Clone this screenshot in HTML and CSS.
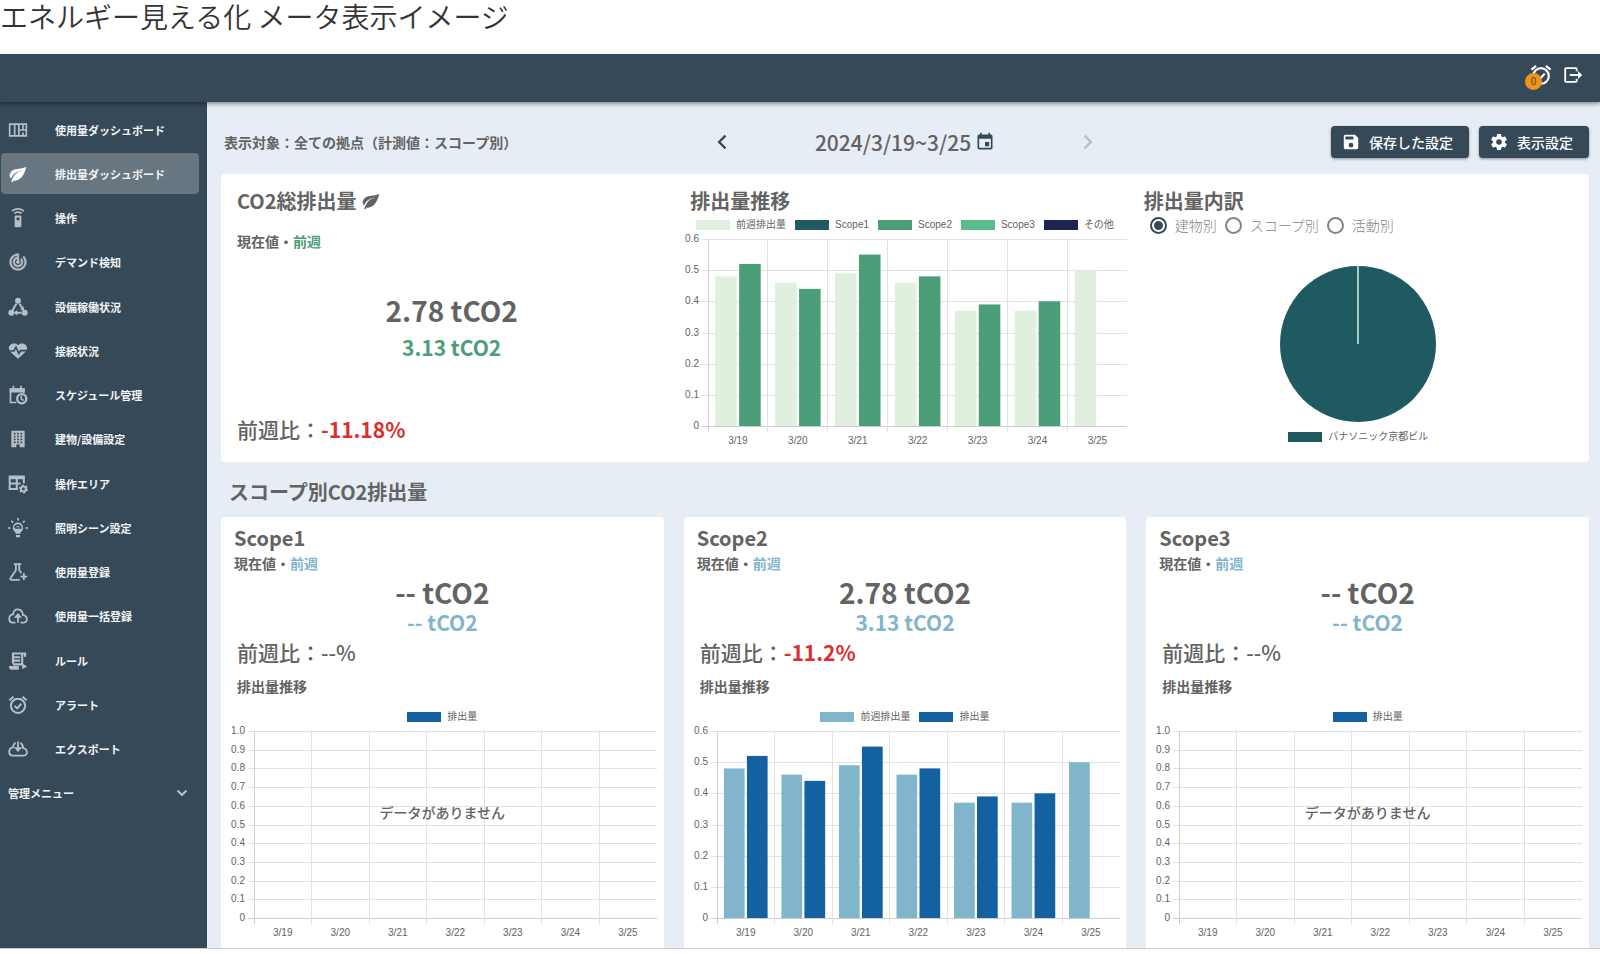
FILE: index.html
```html
<!DOCTYPE html>
<html lang="ja">
<head>
<meta charset="utf-8">
<meta name="viewport" content="width=device-width, initial-scale=1">
<title>エネルギー見える化 メータ表示イメージ</title>
<link rel="stylesheet" href="styles.css">
</head>
<body>
<svg class="sprite" aria-hidden="true">
  <symbol id="i-leaf" viewBox="0 0 24 24"><path d="M17,8C8,10 5.9,16.17 3.82,21.34L5.71,22L6.66,19.7C7.14,19.87 7.64,20 8,20C19,20 22,3 22,3C21,5 14,5.25 9,6.25C4,7.25 2,11.5 2,13.5C2,15.5 3.75,17.25 3.75,17.25C7,8 17,8 17,8Z"/></symbol>
  <symbol id="i-alarm" viewBox="0 0 24 24"><g fill="none" stroke="currentColor" stroke-width="2.400"><circle cx="12" cy="13" r="8.500"/><path d="M8 13l3 3 5-5.500M1.600 6.200L6.600 2M22.400 6.200L17.400 2"/></g></symbol>
</svg>

<h1 class="page-title">エネルギー見える化 メータ表示イメージ</h1>

<div class="app">
  <header class="topbar">
    <button class="icon-button" type="button" aria-label="アラート">
      <svg class="icon icon-top" viewBox="0 0 24 24"><use href="#i-alarm"/></svg>
      <span class="badge">0</span>
    </button>
    <button class="icon-button" type="button" aria-label="ログアウト">
      <svg class="icon icon-top" viewBox="0 0 24 24"><path fill="none" stroke="currentColor" stroke-width="2" d="M16 8V5.500Q16 4.500 15 4.500H4.500Q3.500 4.500 3.500 5.500V18.500Q3.500 19.500 4.500 19.500H15Q16 19.500 16 18.500V16M8.500 12H20"/><path d="M17.500 7.500L22 12L17.500 16.500Z"/></svg>
    </button>
  </header>

  <div class="body">
    <nav class="sidebar" aria-label="メニュー">
      <a class="nav-item" href="#"><svg class="icon" viewBox="0 0 24 24"><path fill="none" stroke="currentColor" stroke-width="2" d="M2 5H22V19H2ZM8 5V19M13 5V19M18 5V12M13 12H22M18 15V19"/></svg>使用量ダッシュボード</a>
      <a class="nav-item nav-item-active" href="#" aria-current="page"><svg class="icon" viewBox="0 0 24 24"><use href="#i-leaf"/></svg>排出量ダッシュボード</a>
      <a class="nav-item" href="#"><svg class="icon" viewBox="0 0 24 24"><path d="M12,0C8.96,0 6.21,1.23 4.22,3.22L5.63,4.63C7.26,3 9.5,2 12,2C14.5,2 16.74,3 18.36,4.64L19.77,3.23C17.79,1.23 15.04,0 12,0M7.05,6.05L8.46,7.46C9.37,6.56 10.62,6 12,6C13.38,6 14.63,6.56 15.54,7.46L16.95,6.05C15.68,4.78 13.93,4 12,4C10.07,4 8.32,4.78 7.05,6.05M12,15A2,2 0 0,1 10,13A2,2 0 0,1 12,11A2,2 0 0,1 14,13A2,2 0 0,1 12,15M15,9H9A1,1 0 0,0 8,10V22A1,1 0 0,0 9,23H15A1,1 0 0,0 16,22V10A1,1 0 0,0 15,9Z"/></svg>操作</a>
      <a class="nav-item" href="#"><svg class="icon" viewBox="0 0 24 24"><path stroke="currentColor" stroke-width=".6" d="M19.07 4.93l-1.41 1.41C19.1 7.79 20 9.79 20 12c0 4.42-3.58 8-8 8s-8-3.58-8-8c0-4.08 3.05-7.44 7-7.93v2.02C8.16 6.57 6 9.03 6 12c0 3.31 2.69 6 6 6s6-2.69 6-6c0-1.66-.67-3.16-1.76-4.24l-1.41 1.41C15.55 9.9 16 10.9 16 12c0 2.21-1.79 4-4 4s-4-1.79-4-4c0-1.86 1.28-3.41 3-3.86v2.14c-.6.35-1 .98-1 1.72 0 1.1.9 2 2 2s2-.9 2-2c0-.74-.4-1.38-1-1.72V2h-1C6.480 2 2 6.480 2 12s4.480 10 10 10 10-4.480 10-10c0-2.760-1.120-5.260-2.930-7.070z"/></svg>デマンド検知</a>
      <a class="nav-item" href="#"><svg class="icon" viewBox="0 0 24 24"><circle cx="12" cy="4.500" r="3.500"/><circle cx="4" cy="19" r="3.600"/><circle cx="20" cy="19" r="3.600"/><path fill="none" stroke="currentColor" stroke-width="2.400" d="M10 8L5.500 16M14 8L17.500 14M9 19H16"/><path d="M14.500 15.500L19.500 15.500L18.500 11ZM11 15.500V22.500L7 19Z"/></svg>設備稼働状況</a>
      <a class="nav-item" href="#"><svg class="icon" viewBox="0 0 24 24"><path d="M12,21.35L10.55,20.03C5.4,15.36 1,12.27 1,8.5C1,5.41 4.42,3 7.5,3C9.24,3 10.91,3.81 12,5.08C13.09,3.81 14.76,3 16.5,3C19.58,3 23,5.41 23,8.5C23,12.27 18.6,15.36 13.45,20.03L12,21.35Z"/><path class="icon-cut" d="M0 12H7L9.500 7.500L13 15L15 11.500H24"/></svg>接続状況</a>
      <a class="nav-item" href="#"><svg class="icon" viewBox="0 0 24 24"><path fill="none" stroke="currentColor" stroke-width="2" d="M10 21H3V5H19V10M6.500 1V5M15.500 1V5"/><path d="M2 4H20V9H2Z"/><circle cx="16.500" cy="16.500" r="5.500" fill="none" stroke="currentColor" stroke-width="2.800"/><path fill="none" stroke="currentColor" stroke-width="1.800" d="M16 13V17L19 18.500"/></svg>スケジュール管理</a>
      <a class="nav-item" href="#"><svg class="icon" viewBox="0 0 24 24"><path d="M4 2H20V22H14V18.500H10V22H4Z"/><path class="icon-cut" stroke-dasharray="2 2" d="M7 5.500H18M7 9H18M7 12.500H18M7 16H18"/></svg>建物/設備設定</a>
      <a class="nav-item" href="#"><svg class="icon" viewBox="0 0 24 24"><path fill="none" stroke="currentColor" stroke-width="2.400" d="M12 18H2V3H19V11M2 5H19M10.500 3V18M2 11.500H15"/><circle cx="18.500" cy="18" r="3" fill="none" stroke="currentColor" stroke-width="2.500"/><circle cx="18.500" cy="18" r="4.700" fill="none" stroke="currentColor" stroke-width="1.600" stroke-dasharray="2.460 2.460"/></svg>操作エリア</a>
      <a class="nav-item" href="#"><svg class="icon" viewBox="0 0 24 24"><path fill="none" stroke="currentColor" stroke-width="2" d="M12 0V3M0 12H3M21 12H24M4 3.500L6 5.500M20 3.500L18 5.500"/><path d="M12 5.500A6.300 6.300 0 0 0 9 17.200V19H15V17.200A6.300 6.300 0 0 0 12 5.500ZM9.500 20.500H14.500V23H9.500Z"/><path class="icon-cut" d="M8.500 12H15.500A3.500 3.500 0 0 0 8.500 12"/></svg>照明シーン設定</a>
      <a class="nav-item" href="#"><svg class="icon" viewBox="0 0 24 24"><path fill="none" stroke="currentColor" stroke-width="2.200" d="M7 2.500H16M9.500 3V10L3 19.500C2.500 21 3 21.500 4 21.500H14M13.500 3V9.500L16 13.500M19 13.500V21.500M15 17.500H23"/></svg>使用量登録</a>
      <a class="nav-item" href="#"><svg class="icon" viewBox="0 0 24 24"><path fill="none" stroke="currentColor" stroke-width="2.200" d="M9 20H6C-.500 19.500 .500 10.500 6 10C7.500 1.500 17 2.500 18 11C24 11.500 24 20 19 20H15M12 20V12"/><path d="M7 14L12 8.500L17 14Z"/></svg>使用量一括登録</a>
      <a class="nav-item" href="#"><svg class="icon" viewBox="0 0 24 24"><path fill="none" stroke="currentColor" stroke-width="2.600" d="M6 15V3H20.500V7M17 3V16H6M6 7.500H14.500M6 11.500H14.500"/><path d="M1 18H13V22.500H4C2 22.500 1 20 1 18ZM17 15L23 18.500L17 22Z"/></svg>ルール</a>
      <a class="nav-item" href="#"><svg class="icon" viewBox="0 0 24 24"><use href="#i-alarm"/></svg>アラート</a>
      <a class="nav-item" href="#"><svg class="icon" viewBox="0 0 24 24"><path fill="none" stroke="currentColor" stroke-width="2.200" d="M9 4.500C7 6 6 8 6 10C.500 10.500 -.500 19.500 6 20H19C24 20 24 11.500 18 11C18 8 17 6 15 4.500M12 3V12"/><path d="M7 10H17L12 15.500Z"/></svg>エクスポート</a>
      <button class="nav-group" type="button" aria-expanded="false">管理メニュー<svg class="icon icon-small" viewBox="0 0 24 24"><path fill="none" stroke="currentColor" stroke-width="4" d="M3 7L12 16L21 7"/></svg></button>
    </nav>

    <main class="content">
      <div class="toolbar">
        <p class="target">表示対象：全ての拠点（計測値：スコープ別）</p>
        <div class="period">
          <button class="step" type="button" aria-label="前の週"><svg class="icon icon-small" viewBox="0 0 24 24"><path fill="none" stroke="currentColor" stroke-width="4" d="M18 1L7 12L18 23"/></svg></button>
          <button class="date" type="button">2024/3/19~3/25<svg class="icon icon-date" viewBox="0 0 24 24"><path d="M17 12h-5v5h5v-5zM16 1v2H8V1H6v2H5c-1.110 0-1.990.9-1.990 2L3 19c0 1.100.89 2 2 2h14c1.100 0 2-.9 2-2V5c0-1.100-.9-2-2-2h-1V1h-2zm3 18H5V8h14v11z"/></svg></button>
          <button class="step" type="button" aria-label="次の週" disabled><svg class="icon icon-small" viewBox="0 0 24 24"><path fill="none" stroke="currentColor" stroke-width="4" d="M6 1L17 12L6 23"/></svg></button>
        </div>
        <div class="actions">
          <button class="action" type="button"><svg class="icon icon-action" viewBox="2 2 20 20"><path d="M15,9H5V5H15M12,19A3,3 0 0,1 9,16A3,3 0 0,1 12,13A3,3 0 0,1 15,16A3,3 0 0,1 12,19M17,3H5C3.89,3 3,3.9 3,5V19A2,2 0 0,0 5,21H19A2,2 0 0,0 21,19V7L17,3Z"/></svg>保存した設定</button>
          <button class="action" type="button"><svg class="icon icon-action" viewBox="2 2 20 20"><path d="M12,15.5A3.5,3.5 0 0,1 8.5,12A3.5,3.5 0 0,1 12,8.5A3.5,3.5 0 0,1 15.5,12A3.5,3.5 0 0,1 12,15.5M19.43,12.97C19.47,12.65 19.5,12.33 19.5,12C19.5,11.67 19.47,11.34 19.43,11L21.54,9.37C21.73,9.22 21.78,8.95 21.66,8.73L19.66,5.27C19.54,5.05 19.27,4.96 19.05,5.05L16.56,6.05C16.04,5.66 15.5,5.32 14.87,5.07L14.5,2.42C14.46,2.18 14.25,2 14,2H10C9.75,2 9.54,2.18 9.5,2.42L9.13,5.07C8.5,5.32 7.96,5.66 7.44,6.05L4.95,5.05C4.73,4.96 4.46,5.05 4.34,5.27L2.34,8.73C2.21,8.95 2.27,9.22 2.46,9.37L4.57,11C4.53,11.34 4.5,11.67 4.5,12C4.5,12.33 4.53,12.65 4.57,12.97L2.46,14.63C2.27,14.78 2.21,15.05 2.34,15.27L4.34,18.73C4.46,18.95 4.73,19.03 4.95,18.95L7.44,17.94C7.96,18.34 8.5,18.68 9.13,18.93L9.5,21.58C9.54,21.82 9.75,22 10,22H14C14.25,22 14.46,21.82 14.5,21.58L14.87,18.93C15.5,18.67 16.04,18.34 16.56,17.94L19.05,18.95C19.27,19.03 19.54,18.95 19.66,18.73L21.66,15.27C21.78,15.05 21.73,14.78 21.54,14.63L19.43,12.97Z"/></svg>表示設定</button>
        </div>
      </div>

      <section class="card summary">
        <div class="summary-total">
          <h2 class="heading">CO2総排出量<svg class="icon icon-heading" viewBox="0 0 24 24"><use href="#i-leaf"/></svg></h2>
          <p class="caption">現在値・<span class="green">前週</span></p>
          <p class="value">2.78 tCO2</p>
          <p class="value-prev green">3.13 tCO2</p>
          <p class="ratio">前週比：<span class="red">-11.18%</span></p>
        </div>
        <div class="summary-trend">
          <h2 class="heading">排出量推移</h2>
          <ul class="legend">
            <li class="legend-item"><span class="swatch swatch-prev"></span>前週排出量</li>
            <li class="legend-item"><span class="swatch swatch-scope1"></span>Scope1</li>
            <li class="legend-item"><span class="swatch swatch-scope2"></span>Scope2</li>
            <li class="legend-item"><span class="swatch swatch-scope3"></span>Scope3</li>
            <li class="legend-item"><span class="swatch swatch-other"></span>その他</li>
          </ul>
          <div class="chart chart-green" data-chart="week"></div>
        </div>
        <div class="summary-share">
          <h2 class="heading">排出量内訳</h2>
          <div class="radios" role="radiogroup" aria-label="排出量内訳">
            <label class="radio"><input type="radio" name="share" checked>建物別</label>
            <label class="radio"><input type="radio" name="share">スコープ別</label>
            <label class="radio"><input type="radio" name="share">活動別</label>
          </div>
          <svg class="pie" viewBox="0 0 158 158" role="img" aria-label="パナソニック京都ビル 100%"><circle cx="79" cy="79" r="79"/><path d="M79 0V79"/></svg>
          <ul class="legend">
            <li class="legend-item"><span class="swatch swatch-scope1"></span>パナソニック京都ビル</li>
          </ul>
        </div>
      </section>

      <h2 class="heading section-heading">スコープ別CO2排出量</h2>

      <div class="scopes">
        <section class="card scope">
          <h3 class="heading">Scope1</h3>
          <p class="caption">現在値・<span class="sky">前週</span></p>
          <p class="value">-- tCO2</p>
          <p class="value-prev sky">-- tCO2</p>
          <p class="ratio">前週比：--%</p>
          <h4 class="trend-title">排出量推移</h4>
          <ul class="legend"><li class="legend-item"><span class="swatch swatch-now"></span>排出量</li></ul>
          <div class="chart" data-chart="empty"><p class="no-data">データがありません</p></div>
        </section>
        <section class="card scope">
          <h3 class="heading">Scope2</h3>
          <p class="caption">現在値・<span class="sky">前週</span></p>
          <p class="value">2.78 tCO2</p>
          <p class="value-prev sky">3.13 tCO2</p>
          <p class="ratio">前週比：<span class="red">-11.2%</span></p>
          <h4 class="trend-title">排出量推移</h4>
          <ul class="legend">
            <li class="legend-item"><span class="swatch swatch-past"></span>前週排出量</li>
            <li class="legend-item"><span class="swatch swatch-now"></span>排出量</li>
          </ul>
          <div class="chart" data-chart="week"></div>
        </section>
        <section class="card scope">
          <h3 class="heading">Scope3</h3>
          <p class="caption">現在値・<span class="sky">前週</span></p>
          <p class="value">-- tCO2</p>
          <p class="value-prev sky">-- tCO2</p>
          <p class="ratio">前週比：--%</p>
          <h4 class="trend-title">排出量推移</h4>
          <ul class="legend"><li class="legend-item"><span class="swatch swatch-now"></span>排出量</li></ul>
          <div class="chart" data-chart="empty"><p class="no-data">データがありません</p></div>
        </section>
      </div>
    </main>
  </div>
</div>
<script src="charts.js"></script>
</body>
</html>
```

FILE: styles.css
```css
:root {
  --navy: #364959;
  --text: #636363;
  --green: #4b9e78;
  --sky: #80b5cb;
  --now: #1461a1;
  --jp: "Noto Sans CJK JP", "Noto Sans", sans-serif;
}

* { box-sizing: border-box; }

body {
  margin: 0;
  min-height: 100vh;
  padding-bottom: 5px;
  display: flex;
  flex-direction: column;
  background: #fff;
  color: var(--text);
  font-family: var(--jp);
  font-size: 14px;
}

h1, h2, h3, h4, p, ul { margin: 0; padding: 0; }
ul { list-style: none; }

button {
  border: 0;
  padding: 0;
  background: none;
  color: inherit;
  font: inherit;
  cursor: pointer;
}

.sprite { position: absolute; width: 0; height: 0; }

.icon {
  width: 20px;
  height: 20px;
  flex: none;
  fill: currentColor;
  overflow: visible;
}
.icon-small { width: 14px; height: 14px; }
.icon-top { width: 22px; height: 22px; display: block; }
.icon-date { width: 20px; height: 20px; color: var(--navy); }
.icon-action { width: 16px; height: 16px; }
.icon-heading { width: 20px; height: 20px; }
.icon-cut { fill: none; stroke: var(--navy); stroke-width: 2; }

.page-title {
  height: 54px;
  color: #333;
  font-size: 28px;
  font-weight: 350;
  line-height: 32px;
}

.app {
  flex: 1;
  display: flex;
  flex-direction: column;
  border-bottom: 1px solid #c9ced3;
}

.topbar {
  position: relative;
  height: 48px;
  padding: 0 16px 6px;
  display: flex;
  align-items: center;
  justify-content: flex-end;
  gap: 10px;
  background: var(--navy);
  color: #fff;
  box-shadow: 0 2px 4px rgba(0, 0, 0, .4);
}
.icon-button { position: relative; }
.badge {
  position: absolute;
  left: -5px;
  bottom: -4px;
  width: 17px;
  height: 17px;
  border-radius: 50%;
  background: #ef9419;
  color: #5a4526;
  font: 10px/17px "Liberation Sans", Arial, sans-serif;
}

.body { flex: 1; display: flex; }

.sidebar {
  width: 207px;
  flex: none;
  padding: 7px 8px 134px 1px;
  display: flex;
  flex-direction: column;
  justify-content: space-between;
  background: var(--navy);
  color: #f2f4f5;
  font-size: 11px;
  font-weight: 700;
}
.nav-item {
  height: 41px;
  padding-left: 7px;
  display: flex;
  align-items: center;
  gap: 27px;
  border-radius: 4px;
  color: inherit;
  text-decoration: none;
}
.nav-item .icon { color: #b4bfc7; }
.nav-item-active { background: #687682; }
.nav-item-active .icon { color: #fff; }
.nav-group {
  height: 41px;
  padding: 0 11px 0 7px;
  display: flex;
  align-items: center;
  justify-content: space-between;
}
.nav-group .icon { width: 12px; height: 12px; color: #b4bfc7; }

.content {
  flex: 1;
  min-width: 0;
  padding: 24px 11px 0 14px;
  display: flex;
  flex-direction: column;
  background: #e6edf4;
}

.toolbar {
  display: grid;
  grid-template-columns: 1fr 382px 1fr;
  align-items: center;
  margin-bottom: 16px;
}
.target { padding-left: 3px; font-weight: 700; white-space: nowrap; }
.period { display: flex; align-items: center; justify-content: space-between; }
.step { width: 16px; height: 24px; display: grid; place-items: center; color: var(--navy); }
.step:disabled { color: #b6bfc7; }
.date { display: flex; align-items: center; gap: 4px; font-size: 21px; font-weight: 500; line-height: 26px; }
.actions { display: flex; justify-content: flex-end; gap: 10px; }
.action {
  height: 32px;
  padding: 0 16px 0 12px;
  display: flex;
  align-items: center;
  gap: 10px;
  border-radius: 4px;
  background: var(--navy);
  color: #fff;
  font-weight: 500;
  white-space: nowrap;
  box-shadow: 0 1px 3px rgba(0, 0, 0, .4);
}

.card { background: #fff; border-radius: 4px; }

.heading {
  display: flex;
  align-items: center;
  gap: 4px;
  font-size: 20px;
  font-weight: 700;
  line-height: 26px;
}
.caption { font-weight: 700; line-height: 24px; }
.value { font-size: 28px; font-weight: 700; line-height: 34px; text-align: center; }
.value-prev { font-size: 21px; font-weight: 700; line-height: 26px; text-align: center; }
.ratio { font-size: 21px; font-weight: 500; line-height: 34px; }
.green { color: var(--green); font-weight: 700; }
.sky { color: var(--sky); font-weight: 700; }
.red { color: #d9302f; font-weight: 700; }

.summary {
  display: grid;
  grid-template-columns: repeat(3, 1fr);
  gap: 8px;
  padding: 14px 8px 16px;
}
.summary-total .heading, .summary-total .caption, .summary-total .ratio,
.summary-trend .heading, .summary-share .heading { padding-left: 8px; }
.summary-total .caption { margin-top: 15px; }
.summary-total .value { margin-top: 40px; }
.summary-total .value-prev { margin-top: 7px; }
.summary-total .ratio { margin-top: 52px; }
.summary-trend .legend { margin-top: 5px; }
.summary-trend .chart { padding: 0 0 14px 26px; }

.radios {
  padding-left: 14px;
  display: flex;
  align-items: center;
  gap: 8px;
  color: #858585;
  font-weight: 300;
  line-height: 22px;
}
.radio { display: flex; align-items: center; gap: 8px; }
.radio input {
  appearance: none;
  width: 17px;
  height: 17px;
  margin: 0;
  border: 2px solid #858585;
  border-radius: 50%;
}
.radio input:checked {
  border-color: var(--navy);
  background: radial-gradient(circle, var(--navy) 4px, transparent 5px);
}

.pie { display: block; width: 156px; height: 156px; margin: 30px auto 9px; }
.pie circle { fill: #205a61; }
.pie path { stroke: #a8cdca; stroke-width: 2; }

.legend {
  display: flex;
  justify-content: center;
  gap: 9px;
  margin-bottom: 8px;
  font-family: "Liberation Sans", "Noto Sans CJK JP", sans-serif;
  font-size: 10px;
  font-weight: 400;
  line-height: 12px;
}
.summary-share .legend { margin-bottom: 0; }
.legend-item { display: flex; align-items: center; gap: 6px; white-space: nowrap; }
.swatch { width: 34px; height: 10px; }
.swatch-prev { background: #e0efde; }
.swatch-scope1 { background: #205a61; }
.swatch-scope2 { background: #4b9e78; }
.swatch-scope3 { background: #5abb8b; }
.swatch-other { background: #1d2353; }
.swatch-past { background: var(--sky); }
.swatch-now { background: var(--now); }

.section-heading { margin: 17px 0 12px; padding-left: 8px; }

.scopes {
  flex: 1;
  display: grid;
  grid-template-columns: repeat(3, 1fr);
  gap: 20px;
}
.scope { padding-top: 8px; border-radius: 4px 4px 0 0; }
.scope .heading, .scope .caption { padding-left: 13px; }
.scope .ratio, .trend-title { padding-left: 16px; }
.trend-title { margin-bottom: 8px; font-size: 14px; font-weight: 700; line-height: 34px; }

.chart { position: relative; padding: 0 7px 30px 33px; }
.plot { display: block; width: 100%; height: 187px; overflow: visible; }
.plot line { stroke: #e2e2e2; shape-rendering: crispEdges; }
.plot .axis { stroke: #cfcfcf; }
.plot text { fill: var(--text); font: 10px "Liberation Sans", Arial, sans-serif; }
.plot .y-label { text-anchor: end; }
.plot .x-label { text-anchor: middle; }
.bar-prev { fill: var(--sky); }
.bar-now { fill: var(--now); }
.chart-green .bar-prev { fill: #e0efde; }
.chart-green .bar-now { fill: var(--green); }

.no-data {
  position: absolute;
  inset: 0 0 55px;
  display: grid;
  place-items: center;
  font-weight: 500;
}
```

FILE: charts.js
```js
const DAYS = ["3/19", "3/20", "3/21", "3/22", "3/23", "3/24", "3/25"];
const HEIGHT = 187;

const CHARTS = {
  week: {
    ticks: ["0", "0.1", "0.2", "0.3", "0.4", "0.5", "0.6"],
    max: 0.6,
    prev: [0.48, 0.46, 0.49, 0.46, 0.37, 0.37, 0.5],
    now: [0.52, 0.44, 0.55, 0.48, 0.39, 0.4, 0]
  },
  empty: {
    ticks: ["0", "0.1", "0.2", "0.3", "0.4", "0.5", "0.6", "0.7", "0.8", "0.9", "1.0"],
    max: 1,
    prev: [],
    now: []
  }
};

function bars(values, max, cls, offset) {
  const step = 100 / DAYS.length;
  return values.map((v, i) => {
    const h = v / max * 100;
    return `<rect class="${cls}" x="${(i + offset) * step}%" y="${100 - h}%" width="${0.36 * step}%" height="${h}%"/>`;
  }).join("");
}

function draw(chart) {
  const step = 100 / DAYS.length;
  let out = "";
  chart.ticks.forEach((label, i) => {
    const y = Math.round(HEIGHT - i * HEIGHT / (chart.ticks.length - 1));
    out += `<line class="${i ? "" : "axis"}" x1="-6" x2="100%" y1="${y}" y2="${y}"/>`;
    out += `<text class="y-label" x="-9" y="${y + 3}">${label}</text>`;
  });
  DAYS.forEach((day, i) => {
    out += `<line class="${i ? "" : "axis"}" x1="${i * step}%" x2="${i * step}%" y1="0" y2="${HEIGHT + 6}"/>`;
    out += `<text class="x-label" x="${(i + 0.5) * step}%" y="${HEIGHT + 18}">${day}</text>`;
  });
  out += bars(chart.prev, chart.max, "bar-prev", 0.12);
  out += bars(chart.now, chart.max, "bar-now", 0.52);
  return `<svg class="plot" role="img" aria-label="排出量推移">${out}</svg>`;
}

document.querySelectorAll("[data-chart]").forEach((el) => {
  el.insertAdjacentHTML("afterbegin", draw(CHARTS[el.dataset.chart]));
});
```
